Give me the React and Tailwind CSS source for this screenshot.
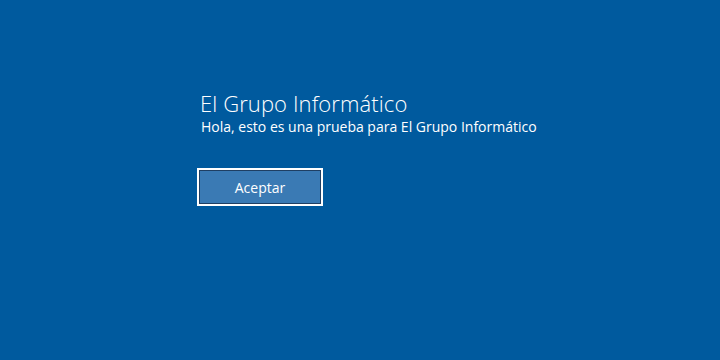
export default function App() {
  return (
    <div className="w-[720px] h-[360px] bg-[#005a9e] text-white font-['Open_Sans',sans-serif] pl-[200px] pt-[89px]">
      <h1 className="text-[22px] font-light leading-[28px] tracking-[0.1px]">El Grupo Informático</h1>
      <p className="text-[14px] leading-[18px] mt-[1px] ml-[1px]">Hola, esto es una prueba para El Grupo Informático</p>
      <button className="mt-[32px] -ml-[3px] w-[126px] h-[38px] border-2 border-white bg-[#1f3f63] p-px">
        <span className="flex h-full w-full items-center justify-center bg-[#3a7ab4] text-[14px]">Aceptar</span>
      </button>
    </div>
  )
}
